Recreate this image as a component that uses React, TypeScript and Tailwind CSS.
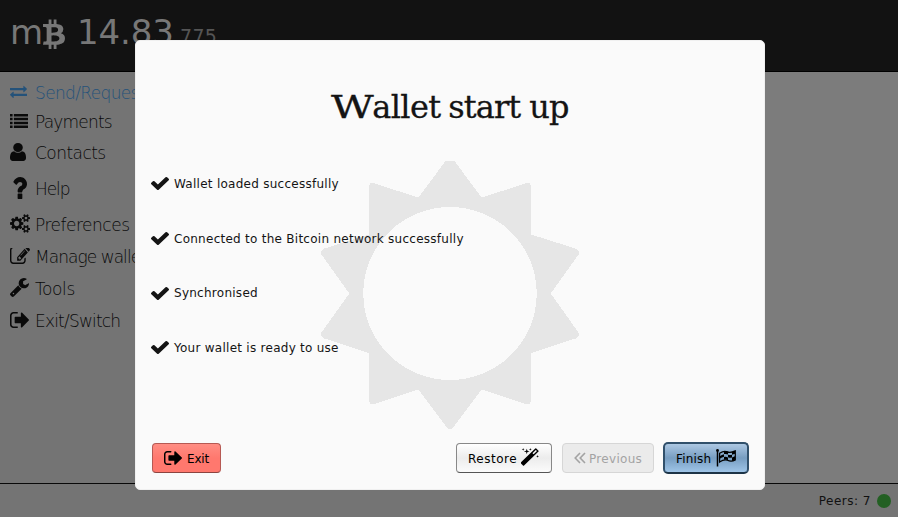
import type { ReactNode } from "react";

const paths = {
  check:
    "M1671 566q0 40-28 68l-724 724-136 136q-28 28-68 28t-68-28l-136-136-362-362q-28-28-28-68t28-68l136-136q28-28 68-28t68 28l294 295 656-657q28-28 68-28t68 28l136 136q28 28 28 68z",
  user: "M1536 1399q0 109-62.5 187t-150.5 78h-854q-88 0-150.5-78t-62.5-187q0-85 8.5-160.5t31.5-152 58.5-131 94-89 134.5-34.5q131 128 313 128t313-128q76 0 134.5 34.5t94 89 58.5 131 31.5 152 8.5 160.5zm-256-887q0 159-112.5 271.5t-271.5 112.5-271.5-112.5-112.5-271.5 112.5-271.5 271.5-112.5 271.5 112.5 112.5 271.5z",
  signOut:
    "M704 1440q0 4 1 20t.5 26.5-3 23.5-10 19.5-20.5 6.5h-320q-119 0-203.5-84.5t-84.5-203.5v-704q0-119 84.5-203.5t203.5-84.5h320q13 0 22.5 9.5t9.5 22.5q0 4 1 20t.5 26.5-3 23.5-10 19.5-20.5 6.5h-320q-66 0-113 47t-47 113v704q0 66 47 113t113 47h312l11.5 1 11.5 3 8 5.5 7 9 2 13.5zm928-544q0 26-19 45l-544 544q-19 19-45 19t-45-19-19-45v-288h-448q-26 0-45-19t-19-45v-384q0-26 19-45t45-19h448v-288q0-26 19-45t45-19 45 19l544 544q19 19 19 45z",
  list: "M0 256h256v256h-256zM384 256h1408v256h-1408zM0 640h256v256h-256zM384 640h1408v256h-1408zM0 1024h256v256h-256zM384 1024h1408v256h-1408zM0 1408h256v256h-256zM384 1408h1408v256h-1408z",
  exchange:
    "M1792 1184v192q0 13-9.5 22.5t-22.5 9.5h-1376v192q0 13-9.5 22.5t-22.5 9.5q-12 0-24-10l-319-320q-9-9-9-22 0-14 9-23l320-320q9-9 23-9 13 0 22.5 9.5t9.5 22.5v192h1376q13 0 22.5 9.5t9.5 22.5zm0-544q0 14-9 23l-320 320q-9 9-23 9-13 0-22.5-9.5t-9.5-22.5v-192h-1376q-13 0-22.5-9.5t-9.5-22.5v-192q0-13 9.5-22.5t22.5-9.5h1376v-192q0-14 9-23t23-9q12 0 24 10l319 319q9 9 9 23z",
  wrench:
    "M448 1472q0-26-19-45t-45-19-45 19-19 45 19 45 45 19 45-19 19-45zm644-420l-682 682q-37 37-90 37-52 0-91-37l-106-108q-38-36-38-90 0-53 38-91l681-681q39 98 114.5 173.5t173.5 114.5zm634-435q0 39-23 106-47 134-164.5 217.5t-258.5 83.5q-185 0-316.5-131.5t-131.5-316.5 131.5-316.5 316.5-131.5q58 0 121.5 16.5t107.5 46.5q16 11 16 28t-16 28l-293 169v224l193 107q5-3 79-48.5t135.5-81 70.5-35.5q15 0 23.5 10t8.5 25z",
  edit: "M888 1184l116-116-152-152-116 116v56h96v96h56zm440-720q-16-16-33 1l-350 350q-17 17-1 33t33-1l350-350q17-17 1-33zm80 594v190q0 119-84.5 203.5t-203.5 84.5h-832q-119 0-203.5-84.5t-84.5-203.5v-832q0-119 84.5-203.5t203.5-84.5h832q63 0 117 25 15 7 18 23 3 17-9 29l-49 49q-14 14-32 8-23-6-45-6h-832q-66 0-113 47t-47 113v832q0 66 47 113t113 47h832q66 0 113-47t47-113v-126q0-13 9-22l64-64q15-15 35-7t20 29zm-96-738l288 288-672 672h-288v-288zm444 132l-92 92-288-288 92-92q28-28 68-28t68 28l152 152q28 28 28 68t-28 68z",
  cogs: "M896 896q0-106-75-181t-181-75-181 75-75 181 75 181 181 75 181-75 75-181zm768 512q0-52-38-90t-90-38-90 38-38 90q0 53 37.5 90.5t90.5 37.5 90.5-37.5 37.5-90.5zm0-1024q0-52-38-90t-90-38-90 38-38 90q0 53 37.5 90.5t90.5 37.5 90.5-37.5 37.5-90.5zm-384 421v185q0 10-7 19.5t-16 10.5l-155 24q-11 35-32 76 34 48 90 115 7 11 7 20 0 12-7 19-23 30-82.5 89.5t-78.5 59.5q-11 0-21-7l-115-90q-37 19-77 31-11 108-23 155-7 24-30 24h-186q-11 0-20-7.5t-10-17.5l-23-153q-34-10-75-31l-118 89q-7 7-20 7-11 0-21-8-144-133-144-160 0-9 7-19 10-14 41-53t47-61q-23-44-35-82l-152-24q-10-1-17-9.5t-7-19.5v-185q0-10 7-19.5t16-10.5l155-24q11-35 32-76-34-48-90-115-7-11-7-20 0-12 7-20 22-30 82-89t79-59q11 0 21 7l115 90q34-18 77-32 11-108 23-154 7-24 30-24h186q11 0 20 7.5t10 17.5l23 153q34 10 75 31l118-89q8-7 20-7 11 0 21 8 144 133 144 160 0 8-7 19-12 16-42 54t-45 60q23 48 34 82l152 23q10 2 17 10.5t7 19.5zm640 533v140q0 16-149 31-12 27-30 52 51 113 51 138 0 4-4 7-122 71-124 71-8 0-46-47t-52-68q-20 2-30 2t-30-2q-14 21-52 68t-46 47q-2 0-124-71-4-3-4-7 0-25 51-138-18-25-30-52-149-15-149-31v-140q0-16 149-31 13-29 30-52-51-113-51-138 0-4 4-7 4-2 35-20t59-34 30-16q8 0 46 46.5t52 67.5q20-2 30-2t30 2q51-71 92-112l6-2q4 0 124 70 4 3 4 7 0 25-51 138 17 23 30 52 149 15 149 31zm0-1024v140q0 16-149 31-12 27-30 52 51 113 51 138 0 4-4 7-122 71-124 71-8 0-46-47t-52-68q-20 2-30 2t-30-2q-14 21-52 68t-46 47q-2 0-124-71-4-3-4-7 0-25 51-138-18-25-30-52-149-15-149-31v-140q0-16 149-31 13-29 30-52-51-113-51-138 0-4 4-7 4-2 35-20t59-34 30-16q8 0 46 46.5t52 67.5q20-2 30-2t30 2q51-71 92-112l6-2q4 0 124 70 4 3 4 7 0 25-51 138 17 23 30 52 149 15 149 31z",
  question:
    "M1088 1256v240q0 16-12 28t-28 12h-240q-16 0-28-12t-12-28v-240q0-16 12-28t28-12h240q16 0 28 12t12 28zm316-600q0 54-15.5 101t-35 76.5-55 59.5-57.5 43.5-61 35.5q-41 23-68.5 65t-27.5 67q0 17-12 32.5t-28 15.5h-240q-15 0-25.5-18.5t-10.5-37.5v-45q0-83 65-156.5t143-108.5q59-27 84-56t25-76q0-42-46.5-74t-107.5-32q-65 0-108 29-35 25-107 115-13 16-31 16-12 0-25-8l-164-125q-13-10-15.5-25t5.5-28q160-266 464-266 80 0 161 31t146 83 106 127.5 41 158.5z",
  btc: "M1422 654q18 182-131 258 117 28 175 103t45 214q-7 71-32.5 125t-64.5 89-97 58.5-121.5 34.5-145.5 15v255h-154v-251q-80 0-122-1v252h-154v-255q-18 0-54-.5t-55-.5h-200l31-183h111q50 0 58-51v-402h16q-6-1-16-1v-287q-13-68-89-68h-111v-164l212 1q64 0 97-1v-252h154v247q82-2 122-2v-245h154v252q79 7 140 22.5t113 45 82.5 78 36.5 114.5zm-215 545q0-36-15-64t-37-46-57.5-30.5-65.5-18.5-74-9-69-3-64.5 1-47.5 1v338q8 0 37 .5t48 .5 53-1.5 58.5-4 57-8.5 55.5-14 47.5-21 39.5-30 24.5-40 9.5-51zm-71-476q0-33-12.5-58.5t-30.5-42-48-28-55-16.5-61.5-8-58-2.5-54 1-39.5.5v307q5 0 34.5.5t46.5 0 50-2 55-5.5 51.5-11 48.5-18.5 37-27 27-38.5 9-51z",
  magic:
    "M1254 581l293-293-107-107-293 293zm447-293q0 27-18 45l-1286 1286q-18 18-45 18t-45-18l-198-198q-18-18-18-45t18-45l1286-1286q18-18 45-18t45 18l198 198q18 18 18 45zm-1351-190l98 30-98 30-30 98-30-98-98-30 98-30 30-98zm350 162l196 60-196 60-60 196-60-196-196-60 196-60 60-196zm930 478l98 30-98 30-30 98-30-98-98-30 98-30 30-98zm-640-640l98 30-98 30-30 98-30-98-98-30 98-30 30-98z",
};

function Icon({ name, box, className }: { name: keyof typeof paths; box: string; className: string }) {
  return (
    <svg viewBox={box} preserveAspectRatio="none" className={`block shrink-0 ${className}`} fill="currentColor">
      <path d={paths[name]} />
    </svg>
  );
}

function NavItem({ icon, label, row, text, active }: { icon: ReactNode; label: string; row: string; text: string; active?: boolean }) {
  return (
    <div className={`flex items-center ${row} ${active ? "text-[#24527a]" : "text-[#0a0a0a]"}`}>
      <span className="flex w-[25px] shrink-0 items-center">{icon}</span>
      <span className={`pt-[2px] text-[17px] leading-6 font-extralight whitespace-nowrap ${text}`}>{label}</span>
    </div>
  );
}

function Step({ label, row }: { label: string; row: string }) {
  return (
    <li className={`flex items-center ${row}`}>
      <Icon name="check" box="121 334 1550 1188" className="mr-[5px] h-[13px] w-[18px]" />
      <span className="text-[12px] leading-4 tracking-[0.265px]">{label}</span>
    </li>
  );
}

function Sun() {
  return (
    <svg viewBox="0 0 280 290" className="block h-[290px] w-[280px]" fill="#e6e6e6" shapeRendering="crispEdges">
      <path
        fillRule="evenodd"
        d="M135.5 11h9L171.5 47.5 214 34Q221 31 221 37V84.500L265.500 98.500Q270 100.500 268.500 104.500L240.700 143.500 268.500 182.500Q270 186.500 265.500 188.500L221 203V250Q221 256 214 253.500L171.500 239.500 143.500 277Q140 281 136.500 277L108.500 239.500 66 253.500Q59 256 59 250V203L14.500 188.500Q10 186.500 11.500 182.500L39.300 143.500 11.500 104.500Q10 100.500 14.500 98.500L59 84.500V37Q59 31 66 34L108.500 47.500ZM140 57A86.700 86.500 0 1 0 140 230A86.700 86.500 0 1 0 140 57Z"
      />
    </svg>
  );
}

function CheckeredFlag() {
  return (
    <svg viewBox="0 0 20 18" className="block h-[18px] w-[20px]" fill="none" stroke="currentColor">
      <path d="M1.500 1.500V17.500" strokeWidth="1.500" />
      <circle cx="1.500" cy="1.500" r="1.400" fill="currentColor" stroke="none" />
      <path d="M3.600 4.200C7 1.900 9 1.700 11.500 2.900S16 3.400 19.300 1.900V11C16 12.700 14 12.500 11.500 11.300S7 10.700 3.600 13Z" strokeWidth="1.200" />
      <path
        d="M8 2.300q2.500-.6 4 .5v2.700q-2-1-4-.4zM3.700 7.200Q6 5.700 8 5.300v2.500Q6 8.200 3.700 9.700zM12 5.700q2 .7 4 .1v2.700q-2 .6-4-.3zM16 3.200l3-1.200v2.700l-3 1.100zM8 8q2-.4 4 .4v3q-2-1.200-4-.7zM16 8.500l3-1.200v3.500l-3 1.200z"
        fill="currentColor"
        stroke="none"
      />
    </svg>
  );
}

export default function App() {
  return (
    <div className="relative flex h-[517px] w-[898px] flex-col overflow-hidden font-['DejaVu_Sans',sans-serif]">
      <header className="flex h-[72px] shrink-0 items-start border-b border-black bg-[#121212] pl-[10px] text-[#777]">
        <span className="w-[32px] pt-[11px] text-[34px] leading-[42px]">m</span>
        <Icon name="btc" box="256 0 1260 1792" className="mt-[17px] h-8 w-[23px]" />
        <span className="w-[98px] pt-[11px] pl-[12px] text-[34px] leading-[42px] tracking-[-0.1px]">14.83</span>
        <span className="pt-[24px] pl-[17px] text-[19px] leading-6 tracking-[0.3px] text-[#555]">775</span>
      </header>

      <div className="flex min-h-0 flex-1">
        <nav className="w-[150px] bg-[#747474] pt-1 pl-[10px]">
          <NavItem row="h-[31px]" text="tracking-[-0.65px]" active label="Send/Request" icon={<Icon name="exchange" box="0 192 1792 1440" className="h-[13px] w-[17px]" />} />
          <NavItem row="h-[27px]" text="tracking-[-0.8px]" label="Payments" icon={<Icon name="list" box="0 256 1792 1408" className="h-[14px] w-[18px]" />} />
          <NavItem row="h-[35px]" text="tracking-[-0.55px]" label="Contacts" icon={<Icon name="user" box="256 128 1280 1536" className="h-[18px] w-4" />} />
          <NavItem row="h-[37px]" text="tracking-[-1.1px]" label="Help" icon={<Icon name="question" box="385 256 1020 1280" className="ml-[2px] h-[22px] w-[15px]" />} />
          <NavItem row="h-[35px]" text="tracking-[-0.5px]" label="Preferences" icon={<Icon name="cogs" box="0 0 1920 1792" className="h-[19px] w-5" />} />
          <NavItem row="h-[30px]" text="tracking-[-0.95px]" label="Manage wallet" icon={<Icon name="edit" box="0 252 1792 1284" className="h-4 w-5" />} />
          <NavItem row="h-[33px]" text="tracking-[-0.4px]" label="Tools" icon={<Icon name="wrench" box="85 128 1641 1643" className="h-[19px] w-[19px]" />} />
          <NavItem row="h-[31px]" text="tracking-[-0.8px]" label="Exit/Switch" icon={<Icon name="signOut" box="64 256 1568 1280" className="h-4 w-[19px]" />} />
        </nav>
        <main className="flex-1 bg-[#7c7c7c]" />
      </div>

      <footer className="flex h-[34px] shrink-0 items-center justify-end border-t border-[#080808] bg-[#747474] pr-[7px] text-[12px] text-[#111]">
        <span className="tracking-[0.5px]">Peers: 7</span>
        <span className="ml-[6px] size-[14px] rounded-full bg-[#236023]" />
      </footer>

      <section
        role="dialog"
        className="absolute top-[40px] left-[135px] flex h-[450px] w-[630px] flex-col rounded-[5px] border border-[#f0f0f0] bg-[#fafafa] text-[#141414]"
      >
        <div className="pointer-events-none absolute top-[109px] left-[174px]">
          <Sun />
        </div>
        <h1 className="mt-[42px] flex h-[49px] justify-center font-['DejaVu_Serif',serif] text-[32px] leading-[48px] [-webkit-text-stroke:0.3px_#141414]">
          <span className="flex w-[117px] whitespace-nowrap">
            <span className="block w-[41px] origin-left scale-x-[1.3]">W</span>
            <span className="tracking-[-0.6px]">allet</span>
          </span>
          <span className="w-[81px] tracking-[-0.9px]">start</span>
          <span className="tracking-[-0.8px]">up</span>
        </h1>
        <ul className="relative mt-[24px] flex h-[220px] flex-col pl-[15px]">
          <Step row="h-[55px]" label="Wallet loaded successfully" />
          <Step row="h-[55px]" label="Connected to the Bitcoin network successfully" />
          <Step row="h-[54px]" label="Synchronised" />
          <Step row="h-[55px]" label="Your wallet is ready to use" />
        </ul>
        <div className="relative mt-auto mb-[15px] flex h-[32px] items-center pr-[15px] pl-4 text-[12px] text-black">
          <button className="flex h-[30px] w-[69px] items-center rounded-[4px] border border-[#b65953] border-b-[#8c4440] bg-linear-to-b from-[#ff8d83] via-[#ff786e] to-[#ff786e] pl-[11px]">
            <Icon name="signOut" box="64 256 1568 1280" className="mr-[5px] h-[14px] w-[18px]" />
            <span className="pt-px tracking-[-0.2px]">Exit</span>
          </button>
          <button className="mr-[10px] ml-auto flex h-[30px] w-[96px] items-center rounded-[4px] border border-[#888] border-b-[#555] bg-linear-to-b from-white via-[#ececec] to-[#fbfbfb] pl-[11px]">
            <span className="pt-px tracking-[0.5px]">Restore</span>
            <Icon name="magic" box="128 0 1600 1664" className="mb-[2px] ml-[4px] h-[18px] w-[18px]" />
          </button>
          <button disabled className="mr-[9px] flex h-[30px] w-[92px] items-center rounded-[4px] border border-[#d6d6d6] bg-[#ebebeb] pl-[11px] text-[#a3a3a3]">
            <svg viewBox="0 0 12 12" className="mr-[3px] h-3 w-3" fill="none" stroke="currentColor" strokeWidth="1.600">
              <path d="M6 1L1.200 6L6 11M11 1L6.200 6L11 11" />
            </svg>
            <span className="pt-px tracking-[0.3px]">Previous</span>
          </button>
          <button className="flex h-[32px] w-[86px] items-center rounded-[5px] border-2 border-[#31506b] border-b-[#1d3447] bg-linear-to-b from-[#adc8e3] via-[#779dc1] to-[#9fc5e8] pl-[11px]">
            <span className="pt-px tracking-[0.2px]">Finish</span>
            <span className="ml-[5px]">
              <CheckeredFlag />
            </span>
          </button>
        </div>
      </section>
    </div>
  );
}
